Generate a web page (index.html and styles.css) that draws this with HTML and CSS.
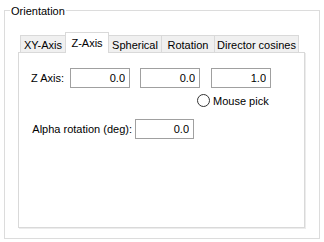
FILE: index.html
```html
<!DOCTYPE html>
<html lang="en">
<head>
    <meta charset="UTF-8">
    <title>Orientation</title>
    <link rel="stylesheet" href="styles.css">
</head>
<body>
    <div class="group">
        <span class="group-title">Orientation</span>
        <div class="tabs">
            <div class="tab first">XY-Axis</div>
            <div class="tab active">Z-Axis</div>
            <div class="tab spherical">Spherical</div>
            <div class="tab rotation">Rotation</div>
            <div class="tab director">Director cosines</div>
        </div>
        <div class="pane">
            <div class="row axis-row">
                <label class="label axis-label">Z Axis:</label>
                <input class="field" type="text" value="0.0">
                <input class="field" type="text" value="0.0">
                <input class="field last" type="text" value="1.0">
            </div>
            <div class="row pick-row">
                <span class="radio"></span>
                <span class="radio-text">Mouse pick</span>
            </div>
            <div class="row alpha-row">
                <label class="label alpha-label">Alpha rotation (deg):</label>
                <input class="field alpha-field" type="text" value="0.0">
            </div>
        </div>
    </div>
</body>
</html>
```

FILE: styles.css
```css
* {
    margin: 0;
    padding: 0;
    box-sizing: border-box;
}
body {
    font-family: "Liberation Sans", Arial, sans-serif;
    font-size: 11px;
    color: #000;
    background-color: #fff;
}
.group {
    position: relative;
    margin: 10px 0 0 4px;
    width: 316px;
    height: 229px;
    border: 1px solid #dcdcdc;
    padding: 21px 0 0 13px;
}
.group-title {
    position: absolute;
    top: -6px;
    left: 5px;
    padding: 0 1px;
    line-height: 13px;
    background-color: #fff;
}
.tabs {
    display: flex;
    align-items: flex-end;
    padding-left: 2px;
    margin-bottom: -1px;
    position: relative;
    z-index: 1;
}
.tab {
    height: 17px;
    margin-bottom: 1px;
    padding-top: 2px;
    line-height: 15px;
    text-align: center;
    white-space: nowrap;
    background-color: #f0f0f0;
    border-top: 1px solid #d9d9d9;
    border-right: 1px solid #d9d9d9;
}
.tab.first {
    width: 45px;
    border-left: 1px solid #d9d9d9;
    border-right: none;
}
.tab.active {
    width: 44px;
    height: 21px;
    margin-bottom: 0;
    padding-top: 3px;
    background-color: #fff;
    border-left: 1px solid #d9d9d9;
}
.tab.spherical {
    width: 53px;
}
.tab.rotation {
    width: 53px;
}
.tab.director {
    width: 84px;
}
.pane {
    width: 287px;
    height: 176px;
    background-color: #fff;
    border: 1px solid #d9d9d9;
    box-shadow: 1px 1px 0 #ececec;
    padding-top: 15px;
}
.row {
    display: flex;
    align-items: center;
}
.label {
    text-align: right;
    white-space: nowrap;
}
.axis-row {
    height: 20px;
    gap: 10px;
}
.axis-label {
    width: 45px;
    margin-right: -4px;
}
.field {
    width: 60px;
    height: 20px;
    border: 1px solid #a0a0a0;
    padding: 0 4px 0 2px;
    text-align: right;
    font-family: inherit;
    font-size: 11px;
    color: #000;
    background-color: #fff;
    outline: none;
}
.field.last {
    margin-left: 1px;
}
.pick-row {
    height: 13px;
    margin-top: 6px;
    padding-left: 178px;
    gap: 3px;
}
.radio {
    width: 13px;
    height: 13px;
    border: 1px solid #333;
    border-radius: 50%;
    background-color: #fff;
}
.alpha-row {
    height: 20px;
    margin-top: 12px;
}
.alpha-label {
    width: 113px;
    margin-right: 3px;
}
.alpha-field {
    width: 59px;
}
```
